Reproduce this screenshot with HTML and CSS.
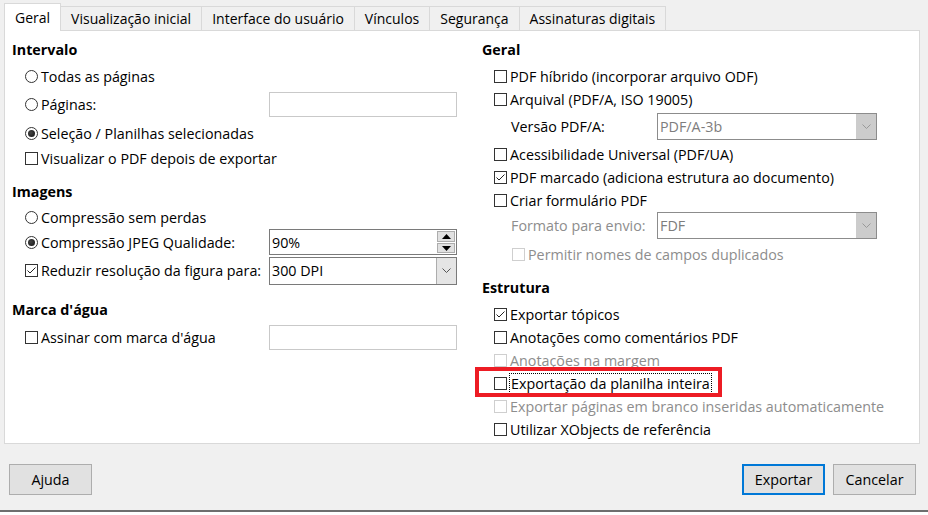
FILE: index.html
```html
<!DOCTYPE html>
<html lang="pt-BR">
<head>
  <meta charset="UTF-8">
  <title>Opções do PDF</title>
  <link rel="stylesheet" href="styles.css">
</head>
<body>
  <div class="dialog">
    <div class="tabs">
      <div class="tab active">Geral</div>
      <div class="tab">Visualização inicial</div>
      <div class="tab">Interface do usuário</div>
      <div class="tab">Vínculos</div>
      <div class="tab">Segurança</div>
      <div class="tab">Assinaturas digitais</div>
    </div>

    <div class="panel">
      <!-- coluna esquerda -->
      <div class="col col-left">
        <div class="section">
          <div class="title">Intervalo</div>
          <div class="row h26"><span class="radio"></span>Todas as páginas</div>
          <div class="row h30"><span class="radio"></span>Páginas:<div class="field light"></div></div>
          <div class="row h28"><span class="radio on"></span>Seleção / Planilhas selecionadas</div>
          <div class="row h22"><span class="check"></span>Visualizar o PDF depois de exportar</div>
        </div>

        <div class="section sec-images">
          <div class="title">Imagens</div>
          <div class="row h23"><span class="radio"></span>Compressão sem perdas</div>
          <div class="row h27"><span class="radio on"></span>Compressão JPEG Qualidade:
            <div class="field spin">
              <span class="value">90%</span>
              <div class="spin-btns">
                <span class="spin-btn"><svg width="9" height="5" viewBox="0 0 9 5"><path d="M0 5 L4.5 0 L9 5 Z" fill="#000"/></svg></span>
                <span class="spin-btn"><svg width="9" height="5" viewBox="0 0 9 5"><path d="M0 0 L4.5 5 L9 0 Z" fill="#000"/></svg></span>
              </div>
            </div>
          </div>
          <div class="row h30"><span class="check"><svg width="11" height="11" viewBox="0 0 11 11"><path d="M1.5 5.5 L4 8 L9.5 2.5" fill="none" stroke="#222" stroke-width="1"/></svg></span>Reduzir resolução da figura para:
            <div class="field combo">
              <span class="value">300 DPI</span>
              <span class="drop"><svg width="9" height="5" viewBox="0 0 9 5"><path d="M0.5 0.5 L4.5 4.5 L8.5 0.5" fill="none" stroke="#555" stroke-width="1"/></svg></span>
            </div>
          </div>
        </div>

        <div class="section sec-watermark">
          <div class="title">Marca d'água</div>
          <div class="row h28"><span class="check"></span>Assinar com marca d'água<div class="field light"></div></div>
        </div>
      </div>

      <!-- coluna direita -->
      <div class="col col-right">
        <div class="section">
          <div class="title">Geral</div>
          <div class="row h23"><span class="check"></span>PDF híbrido (incorporar arquivo ODF)</div>
          <div class="row h23"><span class="check"></span>Arquival (PDF/A, ISO 19005)</div>
          <div class="row h32 sub">
            <span class="sub-label">Versão PDF/A:</span>
            <div class="field combo disabled">
              <span class="value">PDF/A-3b</span>
              <span class="drop"><svg width="9" height="5" viewBox="0 0 9 5"><path d="M0.5 0.5 L4.5 4.5 L8.5 0.5" fill="none" stroke="#999" stroke-width="1"/></svg></span>
            </div>
          </div>
          <div class="row h23"><span class="check"></span>Acessibilidade Universal (PDF/UA)</div>
          <div class="row h23"><span class="check"><svg width="11" height="11" viewBox="0 0 11 11"><path d="M1.5 5.5 L4 8 L9.5 2.5" fill="none" stroke="#222" stroke-width="1"/></svg></span>PDF marcado (adiciona estrutura ao documento)</div>
          <div class="row h23"><span class="check"></span>Criar formulário PDF</div>
          <div class="row h28 sub">
            <span class="sub-label muted">Formato para envio:</span>
            <div class="field combo disabled">
              <span class="value">FDF</span>
              <span class="drop"><svg width="9" height="5" viewBox="0 0 9 5"><path d="M0.5 0.5 L4.5 4.5 L8.5 0.5" fill="none" stroke="#999" stroke-width="1"/></svg></span>
            </div>
          </div>
          <div class="row h30 sub-check muted"><span class="check off"></span>Permitir nomes de campos duplicados</div>
        </div>

        <div class="section sec-structure">
          <div class="title">Estrutura</div>
          <div class="row h23"><span class="check"><svg width="11" height="11" viewBox="0 0 11 11"><path d="M1.5 5.5 L4 8 L9.5 2.5" fill="none" stroke="#222" stroke-width="1"/></svg></span>Exportar tópicos</div>
          <div class="row h23"><span class="check"></span>Anotações como comentários PDF</div>
          <div class="row h23 muted"><span class="check off"></span>Anotações na margem</div>
          <div class="row h23 marked"><span class="check"></span><span class="focus">Exportação da planilha inteira</span></div>
          <div class="row h23 muted"><span class="check off"></span>Exportar páginas em branco inseridas automaticamente</div>
          <div class="row h23"><span class="check"></span>Utilizar XObjects de referência</div>
        </div>
      </div>
    </div>

    <div class="buttons">
      <button class="btn">Ajuda</button>
      <div class="spacer"></div>
      <button class="btn default">Exportar</button>
      <button class="btn">Cancelar</button>
    </div>

    <div class="sheet-strip"></div>
  </div>
</body>
</html>
```

FILE: styles.css
```css
/* caixa de diálogo estilo Windows */
:root {
  --dialog-bg: #f0f0f0;
  --panel-border: #d9d9d9;
  --text-color: #000;
  --muted-color: #8d8d8d;
  --field-border: #7a7a7a;
  --light-border: #c9c9c9;
  --btn-bg: #e1e1e1;
  --btn-border: #adadad;
  --accent: #0078d7;
}

body {
  margin: 0;
  background-color: var(--dialog-bg);
  font-family: 'Open Sans', 'Noto Sans', sans-serif;
  font-size: 14.3px;
  color: var(--text-color);
  overflow: hidden;
}

.dialog {
  width: 928px;
  height: 515px;
  display: flex;
  flex-direction: column;
}

/* abas */
.tabs {
  display: flex;
  align-items: flex-end;
  height: 30px;
  padding-left: 4px;
  box-sizing: border-box;
}

.tab {
  height: 24px;
  padding: 1px 10px 0;
  line-height: 21px;
  font-size: 14px;
  border: 1px solid var(--panel-border);
  border-bottom: none;
  margin-right: -1px;
  box-sizing: border-box;
  background-color: var(--dialog-bg);
  white-space: nowrap;
}

.tab.active {
  height: 28px;
  padding-top: 3px;
  margin-bottom: -1px;
  background-color: #fff;
  position: relative;
  z-index: 1;
}

/* painel */
.panel {
  height: 416px;
  margin: 0 8px 0 4px;
  padding: 9px 0 0 7px;
  border: 1px solid var(--panel-border);
  background-color: #fff;
  box-sizing: border-box;
  display: flex;
  gap: 25px;
}

.col-left {
  width: 445px;
  flex: none;
}

.col-right {
  width: 395px;
  flex: none;
}

.title {
  height: 20px;
  line-height: 20px;
  font-weight: bold;
  margin-bottom: 4px;
}

.col-right .title {
  margin-bottom: 5px;
}

.sec-images {
  margin-top: 12px;
}

.sec-watermark {
  margin-top: 14px;
}

.sec-structure {
  margin-top: 8px;
}

.row {
  display: flex;
  align-items: center;
  padding-left: 13px;
  white-space: nowrap;
  height: 23px;
}

.col-right .row {
  padding-left: 12px;
}

.row.h22 { height: 22px; }
.row.h23 { height: 23px; }
.row.h26 { height: 26px; }
.row.h27 { height: 27px; }
.row.h28 { height: 28px; }
.row.h30 { height: 30px; }
.row.h32 { height: 32px; }

.col-right .row.sub {
  padding-left: 29px;
}

.col-right .row.sub-check {
  padding-left: 30px;
}

.sub-label {
  width: 146px;
  flex: none;
}

.muted {
  color: var(--muted-color);
}

/* radio e checkbox */
.radio,
.check {
  width: 13px;
  height: 13px;
  flex: none;
  box-sizing: border-box;
  border: 1px solid #333;
  background-color: #fff;
  margin-right: 3px;
  display: flex;
  align-items: center;
  justify-content: center;
}

.radio {
  border-radius: 50%;
}

.radio.on::after {
  content: "";
  width: 7px;
  height: 7px;
  border-radius: 50%;
  background: radial-gradient(circle at 40% 40%, #444, #111);
}

.check.off {
  border-color: #cfcfcf;
}

/* campos */
.field {
  margin-left: auto;
  width: 188px;
  height: 25px;
  box-sizing: border-box;
  border: 1px solid var(--field-border);
  background-color: #fff;
  display: flex;
  align-items: center;
  flex: none;
}

.field.light {
  border-color: var(--light-border);
}

.field.spin {
  height: 26px;
}

.field.combo {
  height: 28px;
}

.col-right .field.combo {
  margin-left: 0;
  width: 220px;
  height: 27px;
}

.field .value {
  flex: 1;
  padding-left: 2px;
}

.spin-btns {
  width: 19px;
  height: 100%;
  display: flex;
  flex-direction: column;
  padding: 1px 1px 1px 0;
  box-sizing: border-box;
  gap: 1px;
}

.spin-btn {
  flex: 1;
  background-color: var(--btn-bg);
  border: 1px solid var(--btn-border);
  display: flex;
  align-items: center;
  justify-content: center;
}

.drop {
  width: 19px;
  height: 100%;
  border-left: 1px solid var(--btn-border);
  background-color: #e5e5e5;
  display: flex;
  align-items: center;
  justify-content: center;
}

.field.disabled {
  border-color: #8c8c8c;
  background-color: #fff;
  color: #7d7d7d;
}

.field.disabled .drop {
  width: 20px;
  border-left: none;
  background-color: #cccccc;
}

/* foco e destaque vermelho */
.focus {
  outline: 1px dotted #000;
  line-height: 19px;
  padding: 0 1px;
}

.marked {
  position: relative;
}

.marked::after {
  content: "";
  position: absolute;
  left: -7px;
  top: -5px;
  width: 247px;
  height: 30px;
  box-sizing: border-box;
  border: 4px solid #ed1c24;
  pointer-events: none;
}

/* botões */
.buttons {
  height: 66px;
  padding: 20px 12px 0 9px;
  box-sizing: border-box;
  display: flex;
  gap: 8px;
}

.spacer {
  flex: 1;
}

.btn {
  width: 83px;
  height: 31px;
  background-color: var(--btn-bg);
  border: 1px solid var(--btn-border);
  font-family: inherit;
  font-size: 14.3px;
  color: var(--text-color);
  padding: 0;
}

.btn.default {
  border: 2px solid var(--accent);
}

.sheet-strip {
  height: 3px;
  border-top: 2px solid #6e6e6e;
  background-color: #fff;
}
```
